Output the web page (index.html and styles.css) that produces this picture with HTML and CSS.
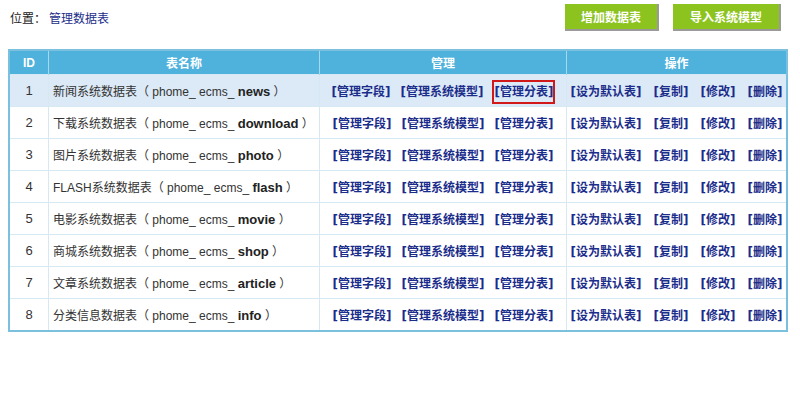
FILE: index.html
```html
<!DOCTYPE html>
<html lang="zh-CN">
<head>
  <meta charset="UTF-8">
  <title>管理数据表</title>
  <link rel="stylesheet" href="styles.css">
</head>
<body>
  <div class="topbar">
    <div class="position">位置：<a href="#">管理数据表</a></div>
    <div class="actions">
      <button type="button" class="btn btn-add">增加数据表</button>
      <button type="button" class="btn btn-import">导入系统模型</button>
    </div>
  </div>

  <table class="tables">
    <thead>
      <tr>
        <th class="col-id">ID</th>
        <th class="col-name">表名称</th>
        <th class="col-manage">管理</th>
        <th class="col-ops">操作</th>
      </tr>
    </thead>
    <tbody>
      <tr class="current">
        <td class="id">1</td>
        <td class="name">新闻系统数据表（ phome_ ecms_ <b>news</b> ）</td>
        <td class="links manage"><a href="#">[管理字段]</a><a href="#">[管理系统模型]</a><a href="#" class="marked">[管理分表]</a></td>
        <td class="links ops"><a href="#">[设为默认表]</a><a href="#">[复制]</a><a href="#">[修改]</a><a href="#">[删除]</a></td>
      </tr>
      <tr>
        <td class="id">2</td>
        <td class="name">下载系统数据表（ phome_ ecms_ <b>download</b> ）</td>
        <td class="links manage"><a href="#">[管理字段]</a><a href="#">[管理系统模型]</a><a href="#">[管理分表]</a></td>
        <td class="links ops"><a href="#">[设为默认表]</a><a href="#">[复制]</a><a href="#">[修改]</a><a href="#">[删除]</a></td>
      </tr>
      <tr>
        <td class="id">3</td>
        <td class="name">图片系统数据表（ phome_ ecms_ <b>photo</b> ）</td>
        <td class="links manage"><a href="#">[管理字段]</a><a href="#">[管理系统模型]</a><a href="#">[管理分表]</a></td>
        <td class="links ops"><a href="#">[设为默认表]</a><a href="#">[复制]</a><a href="#">[修改]</a><a href="#">[删除]</a></td>
      </tr>
      <tr>
        <td class="id">4</td>
        <td class="name">FLASH系统数据表（ phome_ ecms_ <b>flash</b> ）</td>
        <td class="links manage"><a href="#">[管理字段]</a><a href="#">[管理系统模型]</a><a href="#">[管理分表]</a></td>
        <td class="links ops"><a href="#">[设为默认表]</a><a href="#">[复制]</a><a href="#">[修改]</a><a href="#">[删除]</a></td>
      </tr>
      <tr>
        <td class="id">5</td>
        <td class="name">电影系统数据表（ phome_ ecms_ <b>movie</b> ）</td>
        <td class="links manage"><a href="#">[管理字段]</a><a href="#">[管理系统模型]</a><a href="#">[管理分表]</a></td>
        <td class="links ops"><a href="#">[设为默认表]</a><a href="#">[复制]</a><a href="#">[修改]</a><a href="#">[删除]</a></td>
      </tr>
      <tr>
        <td class="id">6</td>
        <td class="name">商城系统数据表（ phome_ ecms_ <b>shop</b> ）</td>
        <td class="links manage"><a href="#">[管理字段]</a><a href="#">[管理系统模型]</a><a href="#">[管理分表]</a></td>
        <td class="links ops"><a href="#">[设为默认表]</a><a href="#">[复制]</a><a href="#">[修改]</a><a href="#">[删除]</a></td>
      </tr>
      <tr>
        <td class="id">7</td>
        <td class="name">文章系统数据表（ phome_ ecms_ <b>article</b> ）</td>
        <td class="links manage"><a href="#">[管理字段]</a><a href="#">[管理系统模型]</a><a href="#">[管理分表]</a></td>
        <td class="links ops"><a href="#">[设为默认表]</a><a href="#">[复制]</a><a href="#">[修改]</a><a href="#">[删除]</a></td>
      </tr>
      <tr>
        <td class="id">8</td>
        <td class="name">分类信息数据表（ phome_ ecms_ <b>info</b> ）</td>
        <td class="links manage"><a href="#">[管理字段]</a><a href="#">[管理系统模型]</a><a href="#">[管理分表]</a></td>
        <td class="links ops"><a href="#">[设为默认表]</a><a href="#">[复制]</a><a href="#">[修改]</a><a href="#">[删除]</a></td>
      </tr>
    </tbody>
  </table>
</body>
</html>
```

FILE: styles.css
```css
body {
  margin: 0;
  padding: 4px 12px 0 8px;
  background: #fff;
  color: #333;
  font-family: "Liberation Sans", "Noto Sans CJK SC", sans-serif;
  font-size: 12px;
}

a {
  color: #1b2d8a;
  text-decoration: none;
}

.topbar {
  display: flex;
  justify-content: space-between;
  align-items: center;
  height: 27px;
  padding: 0 7px 0 2px;
  margin-bottom: 18px;
}

.position {
  color: #222;
}

.position a {
  color: #1b2d8a;
  margin-left: 3px;
}

.actions {
  display: flex;
  gap: 14px;
}

.btn {
  height: 27px;
  padding: 0;
  border: 0;
  border-right: 2px solid #9a9a9a;
  border-bottom: 2px solid #9a9a9a;
  background: #8cc31f;
  color: #fff;
  font-family: "Noto Sans CJK SC", sans-serif;
  font-size: 12px;
  font-weight: bold;
  cursor: pointer;
}

.btn-add {
  width: 94px;
}

.btn-import {
  width: 108px;
}

/* data table list */
.tables {
  width: 780px;
  table-layout: fixed;
  border-collapse: collapse;
  border: 2px solid #7cc0df;
}

.tables th {
  height: 23px;
  padding: 0;
  background: #4eb2dc;
  color: #fff;
  font-weight: bold;
  border-left: 1px solid #a6d8ee;
  text-align: center;
}

.tables td {
  height: 31px;
  padding: 0;
  border: 1px solid #d6e8f2;
  background: #fff;
  white-space: nowrap;
}

.tables tr.current td {
  background: #dce9f6;
}

.col-id {
  width: 38px;
}

.col-name {
  width: 270px;
}

.col-manage {
  width: 246px;
}

.tables td.id {
  text-align: center;
  font-size: 13px;
}

.tables td.name {
  padding-left: 4px;
}

.tables td.name b {
  color: #222;
  font-size: 13px;
}

.tables td.links {
  text-align: center;
}

/* brackets come from DejaVu, the wider ones */
.links a {
  font-family: "DejaVu Sans", "Noto Sans CJK SC", sans-serif;
  font-weight: bold;
  padding: 3px 1px;
}

.manage a {
  margin: 0 4px;
}

.ops a {
  margin: 0 5px;
}

.links a:first-child {
  margin-left: 0;
}

.links a:last-child {
  margin-right: 0;
}

.links a.marked {
  border: 2px solid #d21919;
  padding: 3px 0;
}
```
